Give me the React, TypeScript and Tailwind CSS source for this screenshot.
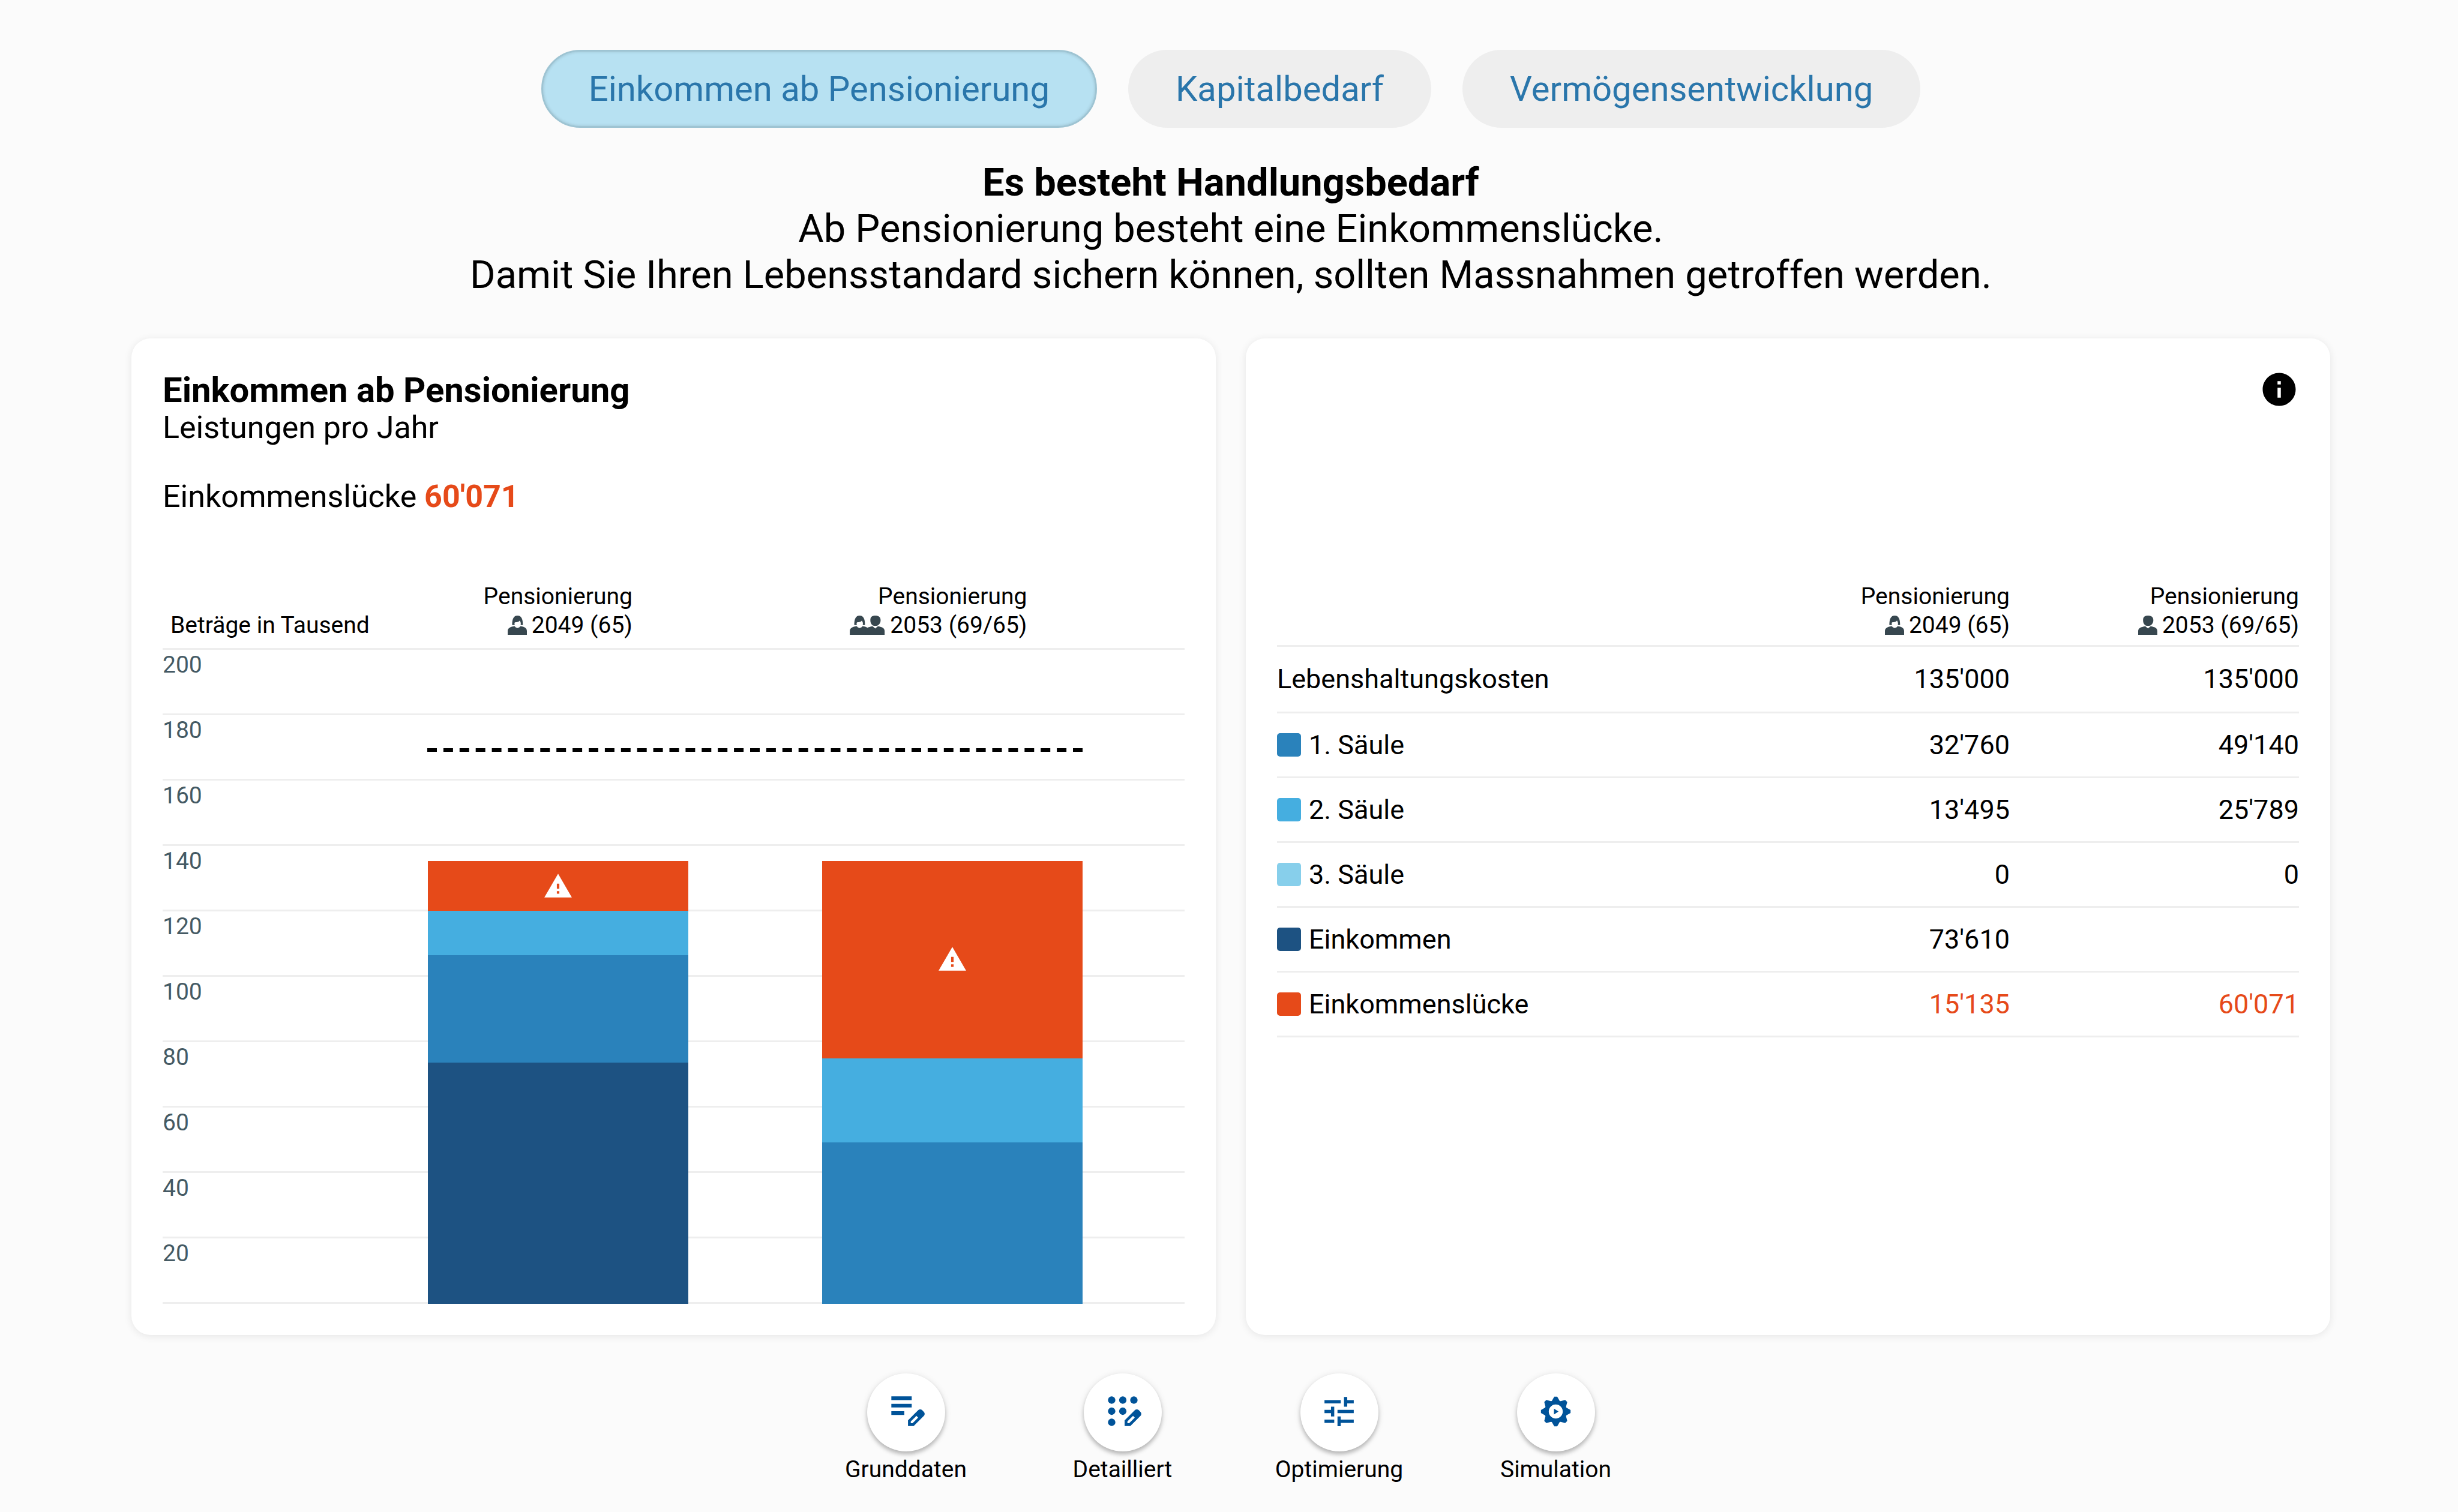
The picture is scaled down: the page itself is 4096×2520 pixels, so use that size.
import type { ReactNode } from "react";

const tabs = ["Einkommen ab Pensionierung", "Kapitalbedarf", "Vermögensentwicklung"];

const MAX = 200;
const ticks = [200, 180, 160, 140, 120, 100, 80, 60, 40, 20];
const livingStandard = 169;

type Segment = { value: number; color: string; warning?: boolean };

const bars: Segment[][] = [
  [
    { value: 15.135, color: "bg-[#e64a19]", warning: true },
    { value: 13.495, color: "bg-[#45aee0]" },
    { value: 32.76, color: "bg-[#2a82bb]" },
    { value: 73.61, color: "bg-[#1d5282]" },
  ],
  [
    { value: 60.071, color: "bg-[#e64a19]", warning: true },
    { value: 25.789, color: "bg-[#45aee0]" },
    { value: 49.14, color: "bg-[#2a82bb]" },
  ],
];

const rows = [
  { label: "Lebenshaltungskosten", first: "135'000", second: "135'000" },
  { label: "1. Säule", swatch: "bg-[#2a82bb]", first: "32'760", second: "49'140" },
  { label: "2. Säule", swatch: "bg-[#45aee0]", first: "13'495", second: "25'789" },
  { label: "3. Säule", swatch: "bg-[#87cfeb]", first: "0", second: "0" },
  { label: "Einkommen", swatch: "bg-[#1d5282]", first: "73'610", second: "" },
  { label: "Einkommenslücke", swatch: "bg-[#e64a19]", first: "15'135", second: "60'071", alert: true },
];

const WOMAN =
  "M10 21C10 8 13 0 22 0S34 8 34 21H29C30 17 29 14 27 11C25 14 21 15 16 15C15 17 15 19 16 21ZM0 43V35C0 28 6 25 16 24C18 29 26 29 28 24C38 25 43 28 43 35V43Z";
const MAN =
  "M11 10C11 3 15 0 22 0S34 3 34 10C34 17 30 23 22 23S11 17 11 10ZM0 43V35C0 28 6 26 16 24L22 29L28 24C38 26 43 28 43 35V43Z";

function WomanIcon() {
  return (
    <svg viewBox="0 0 43 43" className="size-8 shrink-0 fill-[#37474f]" aria-hidden="true">
      <path d={WOMAN} />
    </svg>
  );
}

function ManIcon() {
  return (
    <svg viewBox="0 0 43 43" className="size-8 shrink-0 fill-[#37474f]" aria-hidden="true">
      <path d={MAN} />
    </svg>
  );
}

function CoupleIcon() {
  return (
    <svg viewBox="0 0 79 43" className="h-8 w-[59px] shrink-0 fill-[#37474f]" aria-hidden="true">
      <path d={WOMAN} />
      <path d={MAN} transform="translate(35 0)" />
    </svg>
  );
}

function WarningIcon() {
  return (
    <svg viewBox="0 0 24 24" className="size-[50px] fill-white" role="img" aria-label="Warnung">
      <path d="M1 21h22L12 2 1 21zm12-3h-2v-2h2v2zm0-4h-2v-4h2v4z" />
    </svg>
  );
}

const PENCIL =
  "M520-160v-123l221-220q9-9 20-13t22-4q12 0 23 4.5t20 13.5l37 37q8 9 12.5 20t4.5 22q0 11-4 22.5T863-380L643-160H520Zm60-60h38l121-122-37-37-122 121v38Z";

function NoteIcon() {
  return (
    <svg viewBox="0 -960 960 960" className="size-[74px] fill-[#005399]" aria-hidden="true">
      <path d="M160-400v-80h280v80H160Zm0-160v-80h440v80H160Zm0-160v-80h440v80H160Z" />
      <path d={PENCIL} />
    </svg>
  );
}

function DotsIcon() {
  return (
    <svg viewBox="0 -960 960 960" className="size-[74px] fill-[#005399]" aria-hidden="true">
      <circle cx="240" cy="-720" r="80" />
      <circle cx="480" cy="-720" r="80" />
      <circle cx="720" cy="-720" r="80" />
      <circle cx="240" cy="-480" r="80" />
      <circle cx="480" cy="-480" r="80" />
      <circle cx="240" cy="-240" r="80" />
      <path d={PENCIL} />
    </svg>
  );
}

function TuneIcon() {
  return (
    <svg viewBox="0 0 24 24" className="size-[65px] fill-[#005399]" aria-hidden="true">
      <path d="M3 17v2h6v-2H3zM3 5v2h10V5H3zm10 16v-2h8v-2h-8v-2h-2v6h2zM7 9v2H3v2h4v2h2V9H7zm14 4v-2H11v2h10zm-6-4h2V7h4V5h-4V3h-2v6z" />
    </svg>
  );
}

const teeth = [0, 45, 90, 135, 180, 225, 270, 315];

function GearIcon() {
  return (
    <svg viewBox="-12 -12 24 24" className="size-[65px] fill-[#005399]" aria-hidden="true">
      {teeth.map((angle) => (
        <path key={angle} d="M-2.7-6L-0.9-9.1H0.9L2.7-6Z" transform={`rotate(${angle})`} />
      ))}
      <path
        fillRule="evenodd"
        d="M0-6.9A6.9 6.9 0 1 1 0 6.9A6.9 6.9 0 1 1 0-6.9ZM0-4.3A4.3 4.3 0 1 0 0 4.3A4.3 4.3 0 1 0 0-4.3Z"
      />
      <path d="M-1.1-1.8L1.7 0L-1.1 1.8Z" />
    </svg>
  );
}

function PensionHeader({ icon, text }: { icon: ReactNode; text: string }) {
  return (
    <div className="text-right text-[39px] leading-[48px] font-normal">
      <div>Pensionierung</div>
      <div className="flex w-0 min-w-full items-center justify-end gap-2 whitespace-nowrap">
        {icon}
        <span>{text}</span>
      </div>
    </div>
  );
}

const actions = [
  { label: "Grunddaten", icon: <NoteIcon /> },
  { label: "Detailliert", icon: <DotsIcon /> },
  { label: "Optimierung", icon: <TuneIcon /> },
  { label: "Simulation", icon: <GearIcon /> },
];

function IncomeChart() {
  return (
    <section className="rounded-[32px] bg-white p-[52px] shadow-[0_2px_14px_rgba(0,0,0,0.09)]">
      <h2 className="text-[58px] leading-[68px] font-bold">Einkommen ab Pensionierung</h2>
      <p className="text-[52px] leading-[58px]">Leistungen pro Jahr</p>
      <p className="mt-[57px] text-[52px] leading-[58px]">
        Einkommenslücke <strong className="font-bold text-[#e64a19]">60'071</strong>
      </p>

      <div className="mt-[113px] flex items-end pb-[14px]">
        <div className="w-[330px] pl-[13px] text-[39px] leading-[48px] whitespace-nowrap">
          Beträge in Tausend
        </div>
        <div className="mr-[58px] grid flex-1 grid-cols-2 justify-items-center">
          <PensionHeader icon={<WomanIcon />} text="2049 (65)" />
          <PensionHeader icon={<CoupleIcon />} text="2053 (69/65)" />
        </div>
      </div>

      <div className="relative border-b-3 border-[#eeeeee]">
        {ticks.map((tick) => (
          <div
            key={tick}
            className="h-[109px] border-t-3 border-[#eeeeee] text-[39px] leading-[50px] text-[#455a64]"
          >
            {tick}
          </div>
        ))}
        <div className="absolute top-0 right-[58px] -bottom-[3px] left-[330px] grid grid-cols-2">
          {bars.map((segments, index) => (
            <div key={index} className="mx-auto flex h-full w-[66%] flex-col justify-end">
              {segments.map((segment) => (
                <div
                  key={segment.color}
                  className={`flex items-center justify-center ${segment.color}`}
                  style={{ height: `${(segment.value / MAX) * 100}%` }}
                >
                  {segment.warning && <WarningIcon />}
                </div>
              ))}
            </div>
          ))}
          <svg
            className="absolute right-[8%] left-[8%] h-[6px] w-[84%] px-[6px]"
            style={{ bottom: `${(livingStandard / MAX) * 100 - 0.3}%` }}
            aria-hidden="true"
          >
            <line x1="0" y1="3" x2="100%" y2="3" stroke="black" strokeWidth="6" strokeDasharray="16 10.9" />
          </svg>
        </div>
      </div>
    </section>
  );
}

function IncomeTable() {
  return (
    <section className="rounded-[32px] bg-white p-[52px] shadow-[0_2px_14px_rgba(0,0,0,0.09)]">
      <div className="flex h-[354px] items-start justify-end">
        <button type="button" aria-label="Information">
          <svg viewBox="0 0 24 24" className="size-[66px] fill-black" aria-hidden="true">
            <path d="M12 2C6.48 2 2 6.48 2 12s4.48 10 10 10 10-4.48 10-10S17.52 2 12 2zm1 15h-2v-6h2v6zm0-8h-2V7h2v2z" />
          </svg>
        </button>
      </div>
      <table className="w-full table-fixed border-collapse text-[45px] leading-[54px]">
        <thead>
          <tr className="border-b-3 border-[#eeeeee]">
            <td />
            <th scope="col" className="w-[482px] p-0 pb-[9px] text-right align-bottom">
              <PensionHeader icon={<WomanIcon />} text="2049 (65)" />
            </th>
            <th scope="col" className="w-[482px] p-0 pb-[9px] text-right align-bottom">
              <PensionHeader icon={<ManIcon />} text="2053 (69/65)" />
            </th>
          </tr>
        </thead>
        <tbody>
          {rows.map((row) => (
            <tr key={row.label} className="h-[108px] border-b-3 border-[#eeeeee] first:h-[111px]">
              <th scope="row" className="p-0 text-left font-normal">
                <div className="flex items-center gap-[13px]">
                  {row.swatch && <span className={`h-[39px] w-[40px] rounded-[5px] ${row.swatch}`} />}
                  {row.label}
                </div>
              </th>
              <td className={row.alert ? "p-0 text-right text-[#e64a19]" : "p-0 text-right"}>{row.first}</td>
              <td className={row.alert ? "p-0 text-right text-[#e64a19]" : "p-0 text-right"}>{row.second}</td>
            </tr>
          ))}
        </tbody>
      </table>
    </section>
  );
}

export default function App() {
  return (
    <div className="min-h-screen bg-[#fbfbfb] pt-[83px] pr-[213px] pl-[219px] font-['Roboto',sans-serif] text-black">
      <nav className="flex justify-center gap-[52px]">
        {tabs.map((tab, index) => (
          <button
            key={tab}
            type="button"
            aria-pressed={index === 0}
            className={
              index === 0
                ? "h-[130px] rounded-full border-3 border-[#9ec4d3] bg-[#b7e1f2] px-[76px] text-[58px] text-[#2a76ab] shadow-[inset_0_0_5px_rgba(0,0,0,0.15)]"
                : "h-[130px] rounded-full bg-[#eeeeee] px-[79px] text-[58px] text-[#2a76ab]"
            }
          >
            {tab}
          </button>
        ))}
      </nav>

      <header className="mt-[53px] text-center text-[65px] leading-[77px]">
        <h1 className="font-bold">Es besteht Handlungsbedarf</h1>
        <p>Ab Pensionierung besteht eine Einkommenslücke.</p>
        <p>Damit Sie Ihren Lebensstandard sichern können, sollten Massnahmen getroffen werden.</p>
      </header>

      <main className="mt-[67px] grid grid-cols-2 gap-[50px]">
        <IncomeChart />
        <IncomeTable />
      </main>

      <footer className="mt-[64px] flex justify-center">
        {actions.map((action) => (
          <button
            key={action.label}
            type="button"
            className="flex w-[361px] flex-col items-center gap-[6px] text-[39px] leading-[48px]"
          >
            <span className="flex size-[130px] items-center justify-center rounded-full bg-white pb-1 shadow-[0_5px_6px_rgba(0,0,0,0.2),0_2px_12px_rgba(0,0,0,0.13)]">
              {action.icon}
            </span>
            {action.label}
          </button>
        ))}
      </footer>
    </div>
  );
}
